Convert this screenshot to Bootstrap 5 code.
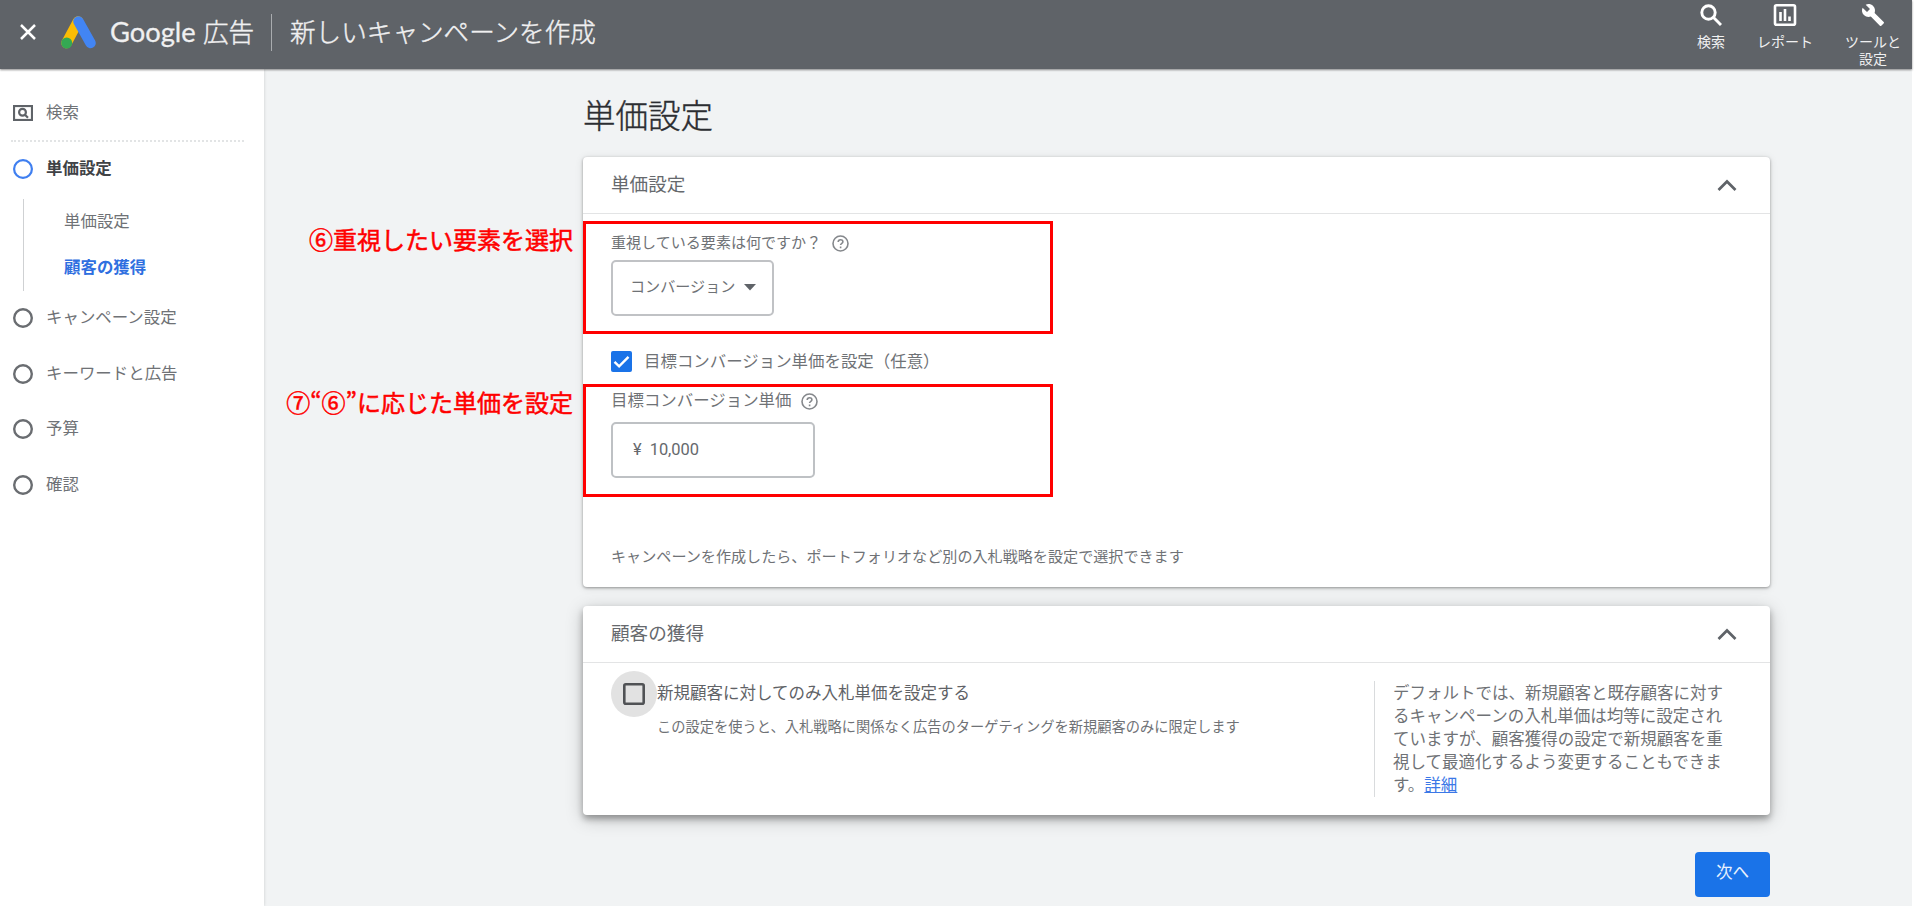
<!DOCTYPE html>
<html lang="ja">
<head>
<meta charset="utf-8">
<title>Google 広告</title>
<meta name="viewport" content="width=device-width, initial-scale=1">
<link rel="stylesheet" href="https://cdn.jsdelivr.net/npm/bootstrap@5.3.0/dist/css/bootstrap.min.css">
<style>
  body { font-family: Roboto, "Noto Sans CJK JP", sans-serif; font-size: 16.45px; line-height: 24px; color: #6f7276; height: 906px; padding-right: 2px; overflow: hidden; background: #fff; }
  svg { display: block; flex: none; }
  .topbar { height: 69px; background: #5f6368; color: #f0f0f1; box-shadow: 0 1px 2px rgba(0,0,0,.45); z-index: 2; padding-left: 20px; }
  .brand-mark { margin: 0 14px 0 25px; }
  .brand { font: 400 27.3px/36px Lato, "Noto Sans CJK JP", sans-serif; width: 93px; -webkit-text-stroke: .3px; }
  .brand-jp, .page-name { font-size: 25.6px; line-height: 36px; font-weight: 300; font-family: "Noto Sans CJK JP", sans-serif; -webkit-text-stroke: .4px; position: relative; top: -1px; }
  .brand-jp { width: 68px; }
  .bar-sep { width: 1px; height: 37px; background: #a9acaf; margin-right: 18px; }
  .tool { font-size: 14px; line-height: 17px; text-align: center; padding-top: 3px; }
  .tool svg { margin: 0 auto 7px; }
  .tools { gap: 32px; padding-right: 11px; }
  .side { width: 264px; background: #fff; box-shadow: 0 0 3px rgba(0,0,0,.16); padding: 32px 20px 0 11px; }
  .step { height: 24px; padding-left: 2px; gap: 13px; }
  .side hr { margin: 15px 0 15px; border: 0; border-top: 2px dotted #e2e4e5; opacity: 1; }
  .substeps { margin: 18px 0 15px 12px; height: 92px; border-left: 1px solid #cfd1d3; padding: 11px 0 0 40px; }
  .content { background: #f1f3f4; padding: 25px 142px 0 319px; }
  h1 { font-size: 32.5px; line-height: 40px; color: #2b2d31; font-weight: 300; margin: 0 0 23px; font-family: "Noto Sans CJK JP", sans-serif; -webkit-text-stroke: .4px; }
  .panel { border: 0; border-radius: 4px; color: inherit; box-shadow: 0 1px 3px rgba(0,0,0,.36), 0 1px 8px rgba(0,0,0,.1); }
  .panel-raised { margin-top: 19px; height: 209px; box-shadow: 0 4px 6px rgba(0,0,0,.3), 0 4px 18px rgba(0,0,0,.22); }
  .panel-top { height: 57px; border-bottom: 1px solid #e3e4e5; padding: 1px 33px 1px 28px; font-size: 18.6px; color: #66696d; }
  .marked { width: 470px; height: 113px; border: 3px solid #f00; margin-top: 7px; padding-left: 25px; position: relative; }
  .callout { position: absolute; top: -3px; right: 100%; margin-right: 13px; white-space: nowrap; color: #f00; font: 500 24px/36px "Noto Sans CJK JP", sans-serif; }
  .callout-plain { font-weight: 400; -webkit-text-stroke: .5px; }
  .t15 { font-size: 15.05px; }
  .picker { width: 163px; height: 56px; border: 2px solid #c0c2c5; border-radius: 5px; padding: 0 16px 2px 17px; font-size: 15.1px; margin-top: 5px; }
  .amount { width: 204px; height: 56px; border: 2px solid #bec1c4; border-radius: 5px; padding: 0 20px; gap: 8px; margin-top: 8px; color: #66696d; }
  .opt { height: 50px; padding: 5px 0 0 28px; gap: 12px; }
  .note { padding: 48px 0 0 28px; font-size: 15.1px; height: 90px; }
  .halo { width: 46px; height: 46px; border-radius: 50%; background: #e2e2e2; flex: none; }
  .explain { width: 380px; height: 116px; margin-top: 18px; border-left: 1px solid #d9dbdd; padding: 1px 0 0 18px; font-size: 16.5px; line-height: 23.1px; }
  .explain a { color: #3b78e7; }
  .next { width: 75px; height: 45px; background: #1a73e8; color: #e8f1fd; border: 0; border-radius: 4px; font-size: 16.6px; padding: 0 0 2px; margin-top: 37px; }
</style>
</head>
<body class="d-flex flex-column">
<header class="topbar d-flex position-relative">
  <div class="d-flex align-items-center" style="height:64px">
    <svg width="16" height="16" viewBox="0 0 16 16" stroke="#fff" stroke-width="2.5"><path d="M1 1l14 14M15 1L1 15"/></svg>
    <svg class="brand-mark" width="35" height="33" viewBox="0 0 35 33"><path d="M17 5.500L5.500 27" stroke="#fbbc04" stroke-width="10.500" stroke-linecap="round"/><path d="M17.500 5.500L29.500 27" stroke="#4285f4" stroke-width="10.500" stroke-linecap="round"/><circle cx="5.700" cy="27" r="5.500" fill="#34a853"/></svg>
    <span class="brand">Google</span><span class="brand-jp">広告</span>
    <span class="bar-sep"></span><span class="page-name">新しいキャンペーンを作成</span>
  </div>
  <div class="tools d-flex ms-auto">
    <div class="tool"><svg width="24" height="24" viewBox="0 0 24 24" fill="none" stroke="#fff" stroke-width="2.900"><circle cx="9.500" cy="9.500" r="6.700"/><path d="M14.300 14.300L22 22"/></svg>検索</div>
    <div class="tool"><svg width="24" height="24" viewBox="0 0 24 24" fill="none" stroke="#fff" stroke-width="2.600"><rect x="2" y="2.200" width="20" height="19.600" rx="1.500"/><path d="M7.500 9v9M12 6v12M16.500 13.500v4.500"/></svg>レポート</div>
    <div class="tool"><svg width="26" height="24" viewBox="0 0 24 24" fill="#fff"><path d="M22.700 19l-9.100-9.100c.9-2.300.4-5-1.500-6.900-2-2-5-2.400-7.400-1.300L9 6 6 9 1.600 4.700C.4 7.100.9 10.100 2.900 12.100c1.900 1.900 4.600 2.400 6.900 1.500l9.100 9.100c.4.400 1 .4 1.400 0l2.300-2.300c.5-.4.5-1.100.1-1.400z"/></svg>ツールと<br>設定</div>
  </div>
</header>
<div class="d-flex flex-grow-1">
  <nav class="side position-relative flex-shrink-0">
    <div class="step d-flex align-items-center"><svg width="20" height="16" viewBox="0 0 20 16" fill="none" stroke="#5f6368" stroke-width="2.200"><rect x="1" y="1" width="18" height="14"/><circle cx="9.500" cy="7.300" r="3.400"/><path d="M12 9.800l3 3"/></svg>検索</div>
    <hr>
    <div class="step d-flex align-items-center fw-bold" style="color:#404246"><svg width="20" height="20" fill="none" stroke="#3f7ff0" stroke-width="2.200"><circle cx="10" cy="10" r="8.900"/></svg>単価設定</div>
    <div class="substeps"><div>単価設定</div><div class="fw-bold" style="color:#2f6fe0;margin-top:22px">顧客の獲得</div></div>
    <div class="d-flex flex-column" style="gap:31.5px">
      <div class="step d-flex align-items-center"><svg width="20" height="20" fill="none" stroke="#6a6d71" stroke-width="2.400"><circle cx="10" cy="10" r="8.800"/></svg>キャンペーン設定</div>
      <div class="step d-flex align-items-center"><svg width="20" height="20" fill="none" stroke="#6a6d71" stroke-width="2.400"><circle cx="10" cy="10" r="8.800"/></svg>キーワードと広告</div>
      <div class="step d-flex align-items-center"><svg width="20" height="20" fill="none" stroke="#6a6d71" stroke-width="2.400"><circle cx="10" cy="10" r="8.800"/></svg>予算</div>
      <div class="step d-flex align-items-center"><svg width="20" height="20" fill="none" stroke="#6a6d71" stroke-width="2.400"><circle cx="10" cy="10" r="8.800"/></svg>確認</div>
    </div>
  </nav>
  <main class="content flex-grow-1">
    <h1>単価設定</h1>
    <section class="panel card">
      <div class="panel-top d-flex align-items-center justify-content-between">単価設定<svg width="20" height="13" viewBox="0 0 20 13" fill="none" stroke="#5f6368" stroke-width="2.700"><path d="M1.500 11L10 2.500l8.500 8.500"/></svg></div>
      <div class="marked">
        <div class="callout callout-plain">⑥重視したい要素を選択</div>
        <div class="d-flex align-items-center t15" style="gap:11px;padding-top:7px">重視している要素は何ですか？<svg width="17" height="17" viewBox="0 0 17 17" fill="none" stroke="#85888c" stroke-width="1.600"><circle cx="8.500" cy="8.500" r="7.500"/><path d="M6.200 7c0-3 4.700-3 4.700-.3 0 1.600-2.300 1.700-2.300 3.400M8.600 11.500v1.700"/></svg></div>
        <div class="picker d-flex align-items-center justify-content-between">コンバージョン<svg width="12" height="7" fill="#5f6368"><path d="M0 0h12L6 6.500z"/></svg></div>
      </div>
      <div class="opt d-flex align-items-center"><svg width="21" height="21" viewBox="0 0 21 21"><rect width="21" height="21" rx="2" fill="#1a73e8"/><path d="M3.500 10.800l4.600 4.600L17.500 5.800" fill="none" stroke="#fff" stroke-width="2.400"/></svg>目標コンバージョン単価を設定（任意）</div>
      <div class="marked mt-0">
        <div class="callout callout-plain">⑦“⑥”に応じた単価を設定</div>
        <div class="d-flex align-items-center" style="gap:10px;padding-top:2px;margin-bottom:9px">目標コンバージョン単価<svg width="17" height="17" viewBox="0 0 17 17" fill="none" stroke="#85888c" stroke-width="1.600"><circle cx="8.500" cy="8.500" r="7.500"/><path d="M6.200 7c0-3 4.700-3 4.700-.3 0 1.600-2.300 1.700-2.300 3.400M8.600 11.500v1.700"/></svg></div>
        <div class="amount d-flex align-items-center mt-0"><span>¥</span><span>10,000</span></div>
      </div>
      <div class="note">キャンペーンを作成したら、ポートフォリオなど別の入札戦略を設定で選択できます</div>
    </section>
    <section class="panel panel-raised card">
      <div class="panel-top d-flex align-items-center justify-content-between">顧客の獲得<svg width="20" height="13" viewBox="0 0 20 13" fill="none" stroke="#5f6368" stroke-width="2.700"><path d="M1.500 11L10 2.500l8.500 8.500"/></svg></div>
      <div class="d-flex justify-content-between pe-3">
        <div class="d-flex" style="padding:8px 0 0 28px">
          <div class="halo d-flex align-items-center justify-content-center"><svg width="22" height="22" fill="none" stroke="#505255" stroke-width="2.600"><rect x="1.300" y="1.300" width="19.400" height="19.400" rx="1.500"/></svg></div>
          <div style="padding-top:11px"><div style="color:#5f6266;font-size:16.5px">新規顧客に対してのみ入札単価を設定する</div><div style="font-size:14.26px;margin-top:9px">この設定を使うと、入札戦略に関係なく広告のターゲティングを新規顧客のみに限定します</div></div>
        </div>
        <div class="explain">デフォルトでは、新規顧客と既存顧客に対す<br>るキャンペーンの入札単価は均等に設定され<br>ていますが、顧客獲得の設定で新規顧客を重<br>視して最適化するよう変更することもできま<br>す。<a href="#">詳細</a></div>
      </div>
    </section>
    <button class="next btn d-block ms-auto">次へ</button>
  </main>
</div>
<script src="https://cdn.jsdelivr.net/npm/bootstrap@5.3.0/dist/js/bootstrap.bundle.min.js"></script>
</body>
</html>
